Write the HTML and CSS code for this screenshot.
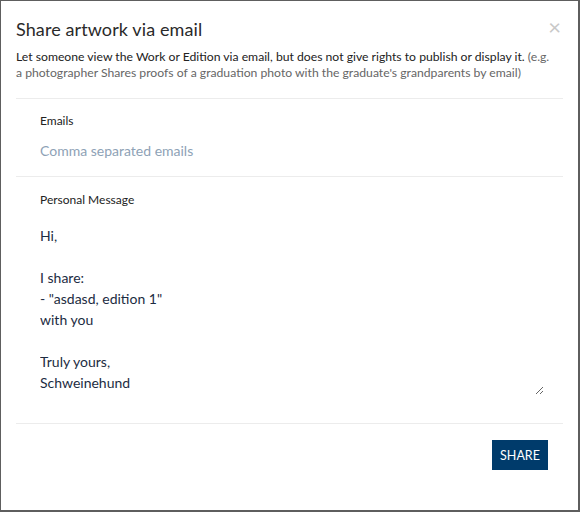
FILE: index.html
```html
<!DOCTYPE html>
<html>
<head>
<meta charset="utf-8">
<link rel="stylesheet" href="styles.css">
</head>
<body>
<div class="modal">
  <div class="head">
    <h2 class="title">Share artwork via email</h2>
    <span class="close">&times;</span>
  </div>
  <p class="desc">Let someone view the Work or Edition via email, but does not give rights to publish or display it. <span class="eg">(e.g. a photographer Shares proofs of a graduation photo with the graduate's grandparents by email)</span></p>
  <div class="section">
    <label class="label">Emails</label>
    <input class="emails" type="text" placeholder="Comma separated emails">
  </div>
  <div class="section section-msg">
    <label class="label">Personal Message</label>
    <textarea class="message">Hi,

I share:
- "asdasd, edition 1"
with you

Truly yours,
Schweinehund</textarea>
  </div>
  <div class="footer">
    <button class="share">SHARE</button>
  </div>
</div>
</body>
</html>
```
FILE: styles.css
```css
html, body {
  margin: 0;
  padding: 0;
  background: #fff;
}
body {
  font-family: Lato, "Open Sans", sans-serif;
  color: #333;
}
.modal {
  width: 580px;
  height: 512px;
  box-sizing: border-box;
  border-style: solid;
  border-color: #5e5e5e;
  border-width: 1px 2px 2px 1px;
  padding: 0 15px 0 15px;
  display: flex;
  flex-direction: column;
}
.head {
  display: flex;
  justify-content: space-between;
  align-items: flex-start;
  padding-top: 17px;
}
.title {
  margin: 0;
  font-size: 18px;
  font-weight: 400;
  line-height: 22px;
  color: #2a2a2a;
  letter-spacing: 0.1px;
}
.close {
  font-size: 22px;
  line-height: 18px;
  color: #c8c8c8;
  margin-right: 2px;
  margin-top: 0;
}
.desc {
  margin: 9px 0 0;
  font-size: 12.2px;
  line-height: 16px;
  color: #222;
  padding: 0 8px 17px 0;
  border-bottom: 1px solid #ececec;
}
.eg {
  color: #666;
}
.section {
  padding: 14px 24px 0;
  display: flex;
  flex-direction: column;
  border-bottom: 1px solid #ececec;
}
.label {
  font-size: 12px;
  line-height: 16px;
  color: #222;
}
.emails {
  border: none;
  outline: none;
  padding: 0;
  margin: 13px 0 16px;
  font-family: inherit;
  font-size: 14px;
  line-height: 18px;
  color: #223;
}
.emails::placeholder {
  color: #8ea2b6;
}
.section-msg {
  padding-top: 15px;
  padding-bottom: 28px;
  padding-right: 19px;
}
.message {
  border: none;
  outline: none;
  padding: 0;
  margin: 17px 0 0;
  height: 170px;
  font-family: inherit;
  font-size: 14px;
  line-height: 21px;
  color: #1c2c42;
  resize: vertical;
}
.footer {
  display: flex;
  justify-content: flex-end;
  padding: 16px 15px 0 0;
}
.share {
  background: #003b6b;
  color: #fff;
  border: none;
  width: 56px;
  height: 30px;
  padding: 0;
  font-family: inherit;
  font-size: 12.5px;
  letter-spacing: 0;
}
```
